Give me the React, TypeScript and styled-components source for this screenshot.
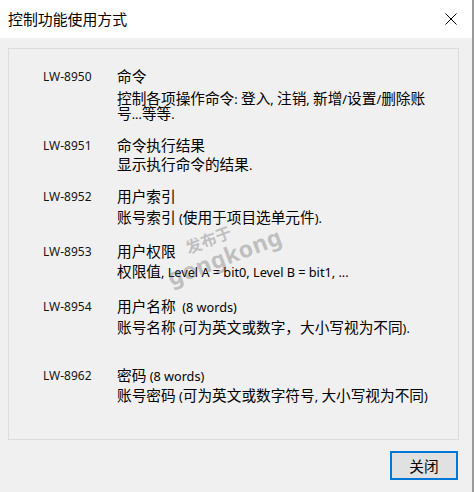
import React from "react";
import styled, { createGlobalStyle } from "styled-components";

const GlobalStyle = createGlobalStyle`
  html, body {
    margin: 0;
    padding: 0;
    background: #f0f0f0;
  }
`;

const CJK = `"Noto Sans CJK SC", "Microsoft YaHei", sans-serif`;
const LATIN = `"Noto Sans", "Noto Sans CJK SC", sans-serif`;

const Window = styled.div`
  width: 472px;
  height: 492px;
  display: flex;
  flex-direction: column;
  background: #f0f0f0;
  border-right: 2px solid #9a9a9a;
  font-family: ${CJK};
  color: #000;
`;

const TitleBar = styled.div`
  height: 38px;
  flex: none;
  background: #fff;
  display: flex;
  align-items: center;
  justify-content: space-between;
  padding: 0 15px 0 8px;
  font-size: 14.9px;
  line-height: 20px;
`;

const CloseIcon = styled.svg`
  width: 12px;
  height: 12px;
  display: block;
`;

const Body = styled.div`
  flex: 1;
  display: flex;
  flex-direction: column;
  padding: 10px 13px 0 8px;
`;

const GroupBox = styled.div`
  position: relative;
  height: 392px;
  box-sizing: border-box;
  border: 1px solid #dcdcdc;
  padding: 17px 0 0 34px;
`;

const Row = styled.div<{ $gap: number }>`
  display: grid;
  grid-template-columns: 74px 1fr;
  align-items: start;
  margin-top: ${({ $gap }) => $gap}px;
`;

const Code = styled.div`
  font-family: ${LATIN};
  font-size: 12px;
  line-height: 20px;
  height: 20px;
  color: #141414;
  padding-top: 1px;
`;

const Line = styled.div<{ $h: number }>`
  font-size: 14.67px;
  line-height: ${({ $h }) => $h}px;
  height: ${({ $h }) => $h}px;
  white-space: nowrap;
`;

const Desc = styled.div<{ $gap: number }>`
  margin-top: ${({ $gap }) => $gap}px;
`;

const En = styled.span`
  font-family: ${LATIN};
  font-size: 12.7px;
  line-height: 1;
`;

const Watermark = styled.div`
  position: absolute;
  left: 150px;
  top: 177px;
  width: 124px;
  display: flex;
  flex-direction: column;
  align-items: center;
  transform: rotate(-21deg);
  color: rgba(110, 110, 110, 0.38);
  font-weight: 700;
  pointer-events: none;
`;

const MarkTop = styled.span`
  font-size: 16px;
  line-height: 19px;
  margin-right: 18px;
`;

const MarkBottom = styled.span`
  font-family: ${LATIN};
  font-size: 23px;
  line-height: 24px;
  letter-spacing: 0.5px;
`;

const Footer = styled.div`
  display: flex;
  justify-content: flex-end;
  padding: 11px 1px 0 0;
`;

const Button = styled.button`
  width: 68px;
  height: 29px;
  box-sizing: border-box;
  border: 2px solid #0078d7;
  background: #e1e1e1;
  font-family: ${CJK};
  font-size: 14.67px;
  line-height: 20px;
  color: #000;
  padding: 0;
`;

type EntryProps = {
  code: string;
  gap: number;
  descGap: number;
  title: React.ReactNode;
  lines: React.ReactNode[];
};

function Entry({ code, gap, descGap, title, lines }: EntryProps) {
  return (
    <Row $gap={gap}>
      <Code>{code}</Code>
      <div>
        <Line $h={20}>{title}</Line>
        <Desc $gap={descGap}>
          {lines.map((l, i) => (
            <Line key={i} $h={15}>
              {l}
            </Line>
          ))}
        </Desc>
      </div>
    </Row>
  );
}

export default function App() {
  return (
    <>
      <GlobalStyle />
      <Window>
        <TitleBar>
          <span>控制功能使用方式</span>
          <CloseIcon viewBox="0 0 12 12">
            <path d="M0.5 0.5 L11.5 11.5 M11.5 0.5 L0.5 11.5" stroke="#000" strokeWidth="1" fill="none" />
          </CloseIcon>
        </TitleBar>
        <Body>
          <GroupBox>
            <Entry
              code="LW-8950"
              gap={0}
              descGap={4}
              title="命令"
              lines={[
                <>
                  控制各项操作命令<En>: </En>登入<En>, </En>注销<En>, </En>新增<En>/</En>设置<En>/</En>删除账
                </>,
                <>
                  号<En>...</En>等等<En>.</En>
                </>,
              ]}
            />
            <Entry
              code="LW-8951"
              gap={15}
              descGap={1}
              title="命令执行结果"
              lines={[
                <>
                  显示执行命令的结果<En>.</En>
                </>,
              ]}
            />
            <Entry
              code="LW-8952"
              gap={15}
              descGap={3}
              title="用户索引"
              lines={[
                <>
                  账号索引<En> (</En>使用于项目选单元件<En>).</En>
                </>,
              ]}
            />
            <Entry
              code="LW-8953"
              gap={17}
              descGap={2}
              title="用户权限"
              lines={[
                <>
                  权限值<En>, Level A = bit0, Level B = bit1, ...</En>
                </>,
              ]}
            />
            <Entry
              code="LW-8954"
              gap={18}
              descGap={3}
              title={
                <>
                  用户名称<En>&nbsp; (8 words)</En>
                </>
              }
              lines={[
                <>
                  账号名称<En> (</En>可为英文或数字，大小写视为不同<En>).</En>
                </>,
              ]}
            />
            <Entry
              code="LW-8962"
              gap={31}
              descGap={2}
              title={
                <>
                  密码<En> (8 words)</En>
                </>
              }
              lines={[
                <>
                  账号密码<En> (</En>可为英文或数字符号<En>, </En>大小写视为不同<En>)</En>
                </>,
              ]}
            />
            <Watermark>
              <MarkTop>发布于</MarkTop>
              <MarkBottom>gongkong</MarkBottom>
            </Watermark>
          </GroupBox>
          <Footer>
            <Button>关闭</Button>
          </Footer>
        </Body>
      </Window>
    </>
  );
}
